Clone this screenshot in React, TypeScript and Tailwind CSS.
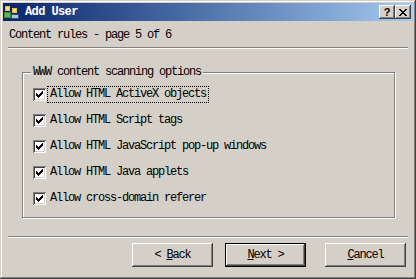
import React from 'react';

const CHECK = [
  '......X',
  '.....XX',
  'X...XXX',
  'XX.XXX.',
  'XXXXX..',
  '.XXX...',
  '..X....',
];

const CheckMark: React.FC = () => (
  <svg width="7" height="7" viewBox="0 0 7 7" shapeRendering="crispEdges">
    {CHECK.flatMap((row, y) =>
      row.split('').map((c, x) => (c === 'X' ? <rect key={`${x}-${y}`} x={x} y={y} width="1" height="1" fill="#000" /> : null))
    )}
  </svg>
);

const Checkbox: React.FC = () => (
  <div className="w-[13px] h-[13px] bg-white flex items-center justify-center shrink-0 shadow-[inset_1px_1px_#808080,inset_-1px_-1px_#fff,inset_2px_2px_#404040,inset_-2px_-2px_#d4d0c8]">
    <CheckMark />
  </div>
);

const options = [
  'Allow HTML ActiveX objects',
  'Allow HTML Script tags',
  'Allow HTML JavaScript pop-up windows',
  'Allow HTML Java applets',
  'Allow cross-domain referer',
];

const raised =
  'shadow-[inset_-1px_-1px_#404040,inset_1px_1px_#fff,inset_-2px_-2px_#808080,inset_2px_2px_#d4d0c8]';

const txt = 'text-[12px] tracking-[-1.2px] leading-none';

const DlgButton: React.FC<{ children: React.ReactNode; isDefault?: boolean }> = ({ children, isDefault }) => (
  <div
    className={
      isDefault
        ? 'w-[81px] h-[24px] border border-black bg-[#d4d0c8]'
        : 'w-[81px] h-[24px] bg-[#d4d0c8]'
    }
  >
    <div className={`w-full h-full flex items-center justify-center ${raised}`}>
      <span className={txt}>{children}</span>
    </div>
  </div>
);

const UsersIcon: React.FC = () => (
  <svg width="16" height="16" viewBox="0 0 16 16" shapeRendering="crispEdges">
    <rect x="1" y="2" width="5" height="5" fill="#e8c040" />
    <rect x="2" y="3" width="3" height="3" fill="#f8e070" />
    <rect x="0" y="8" width="7" height="6" fill="#3a8a3a" />
    <rect x="1" y="9" width="5" height="4" fill="#60b060" />
    <rect x="8" y="4" width="5" height="5" fill="#e8c040" />
    <rect x="9" y="5" width="3" height="3" fill="#f8e070" />
    <rect x="7" y="10" width="8" height="5" fill="#2050a0" />
    <rect x="8" y="11" width="6" height="3" fill="#c0c0c0" />
  </svg>
);

const CaptionButton: React.FC<{ children: React.ReactNode }> = ({ children }) => (
  <div className={`w-[16px] h-[14px] bg-[#d4d0c8] flex items-center justify-center ${raised}`}>{children}</div>
);

export default function App() {
  return (
    <div
      className="w-[416px] h-[279px] bg-[#d4d0c8] p-[3px] flex flex-col text-black shadow-[inset_-1px_-1px_#404040,inset_1px_1px_#d4d0c8,inset_-2px_-2px_#808080,inset_2px_2px_#fff]"
      style={{ fontFamily: '"Liberation Mono", "DejaVu Sans Mono", monospace' }}
    >
      {/* title bar */}
      <div className="h-[18px] bg-gradient-to-r from-[#0a246a] to-[#a6caf0] flex items-center pl-[1px] pr-[2px]">
        <UsersIcon />
        <span className="ml-[5px] text-white font-bold text-[12px] tracking-[-0.6px] leading-none">Add User</span>
        <div className="flex-1" />
        <CaptionButton>
          <span className="font-bold text-[11px] leading-none" style={{ fontFamily: '"Liberation Sans", Arial, sans-serif' }}>?</span>
        </CaptionButton>
        <CaptionButton>
          <svg width="8" height="7" viewBox="0 0 8 7" shapeRendering="crispEdges">
            <path d="M0 0h2v1h-2zM6 0h2v1h-2zM1 1h2v1h-2zM5 1h2v1h-2zM2 2h4v1h-4zM3 3h2v1h-2zM2 4h4v1h-4zM1 5h2v1h-2zM5 5h2v1h-2zM0 6h2v1h-2zM6 6h2v1h-2z" fill="#000" />
          </svg>
        </CaptionButton>
      </div>

      {/* header */}
      <div className="h-[26px] flex items-center pl-[6px] pt-[2px]">
        <span className={txt}>Content rules - page 5 of 6</span>
      </div>
      <div className="mx-[5px] h-[2px] border-t border-[#808080] border-b border-b-white" />

      {/* group box */}
      <fieldset className="mt-[17px] ml-[19px] mr-[18px] h-[152px] border border-[#808080] shadow-[1px_1px_#fff,inset_1px_1px_#fff] px-0 pt-[3px] pb-0 min-w-0">
        <legend className={`ml-[8px] px-[2px] bg-[#d4d0c8] ${txt} !leading-[12px]`}>
          WWW content scanning options
        </legend>
        <div className="flex flex-col pl-[10px]">
          {options.map((o, i) => (
            <div key={o} className="h-[26px] flex items-center">
              <Checkbox />
              <span
                className={
                  i === 0
                    ? `ml-[1px] px-[2px] h-[17px] flex items-center border border-dotted border-black ${txt}`
                    : `ml-[1px] px-[2px] h-[17px] flex items-center border border-transparent ${txt}`
                }
              >
                {o}
              </span>
            </div>
          ))}
        </div>
      </fieldset>

      <div className="h-[18px]" />
      <div className="mx-[5px] h-[2px] border-t border-[#808080] border-b border-b-white" />

      {/* buttons */}
      <div className="mt-[5px] flex justify-end pr-[7px]">
        <DlgButton>
          &lt; <span className="underline">B</span>ack
        </DlgButton>
        <div className="w-[12px]" />
        <DlgButton isDefault>
          <span className="underline">N</span>ext &gt;
        </DlgButton>
        <div className="w-[19px]" />
        <DlgButton>
          <span className="underline">C</span>ancel
        </DlgButton>
      </div>
    </div>
  );
}
